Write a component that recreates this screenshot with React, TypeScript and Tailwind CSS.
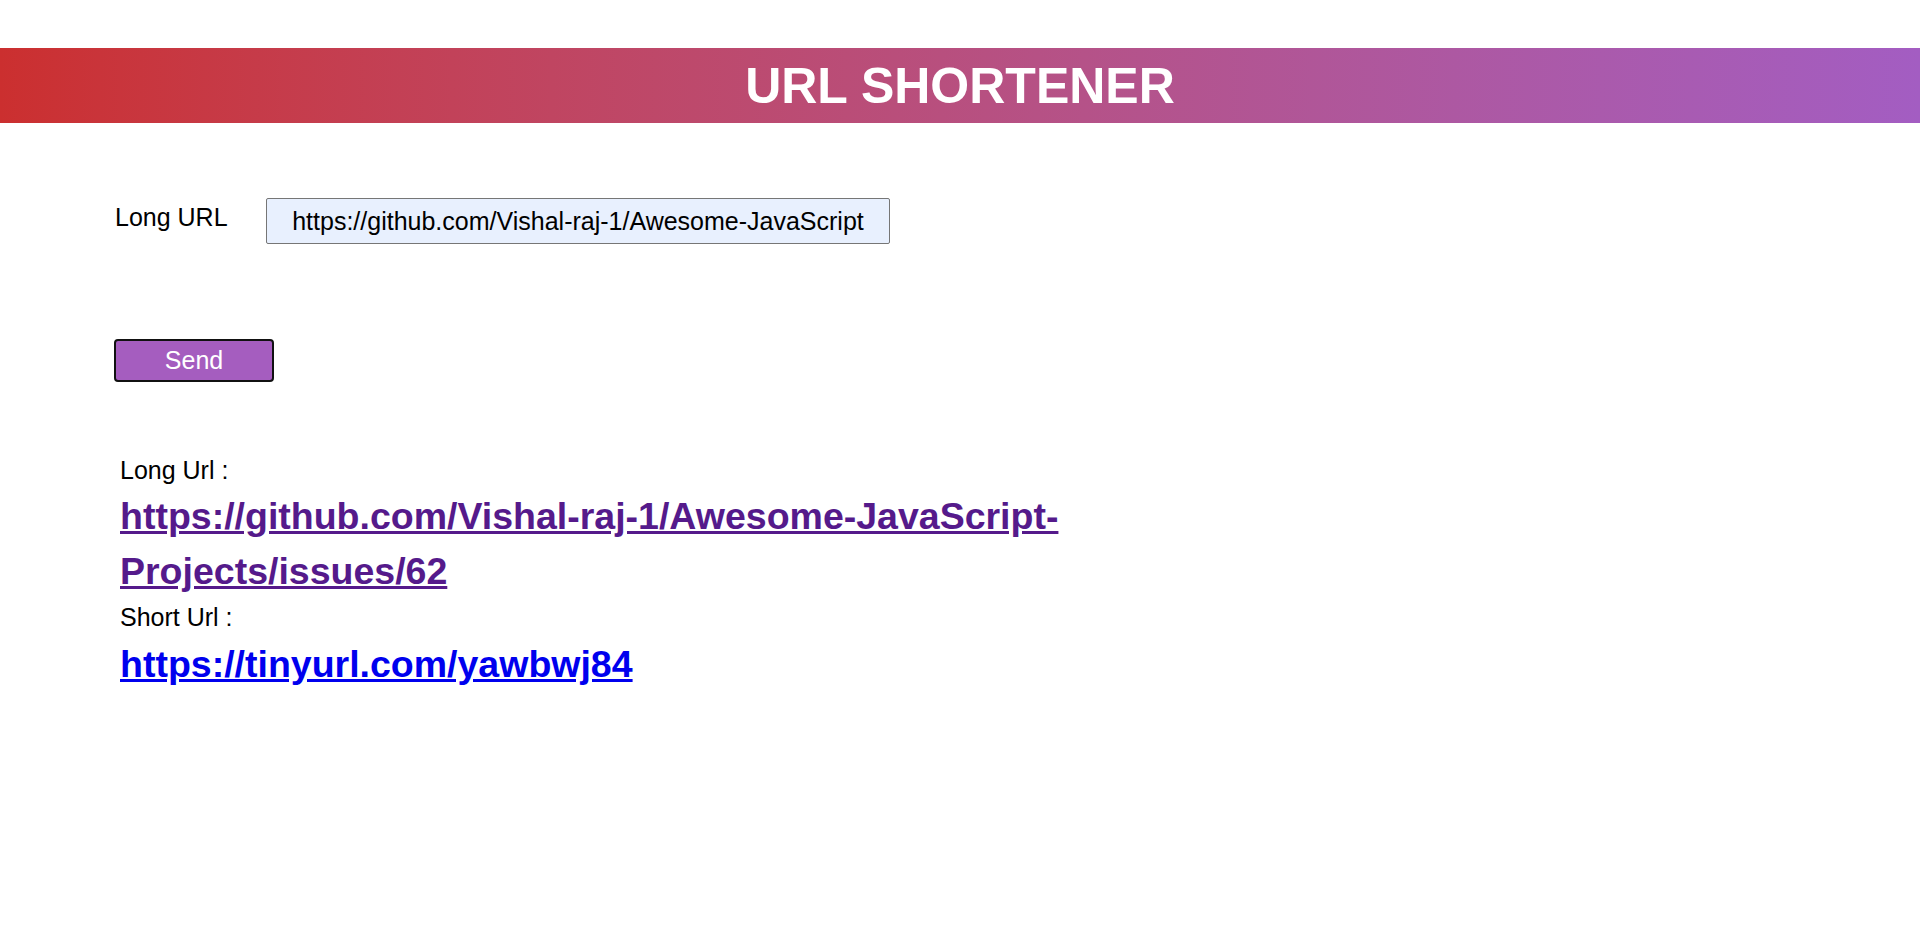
export default function App() {
  return (
    <div className="min-h-screen bg-white pt-[48px] font-['Liberation_Sans',Arial,sans-serif] text-black">
      <header className="flex h-[75px] items-center justify-center bg-gradient-to-r from-[#cb2f2f] to-[#a35dc2]">
        <h1 className="text-[50px] font-bold leading-none text-white">URL SHORTENER</h1>
      </header>

      <main className="pl-[115px]">
        <div className="mt-[75px] flex items-start">
          <label className="w-[151px] pt-[5px] text-[25px] leading-[29px]">Long URL</label>
          <input
            type="text"
            readOnly
            value="https://github.com/Vishal-raj-1/Awesome-JavaScript"
            className="h-[46px] w-[624px] rounded-[2px] border border-[#767676] bg-[#e8f0fe] text-center text-[25px] text-black outline-none"
          />
        </div>

        <button className="ml-[-1px] mt-[95px] h-[43px] w-[160px] rounded-[4px] border-2 border-[#111] bg-[#a55dbf] text-[25px] leading-none text-white">
          Send
        </button>

        <div className="mt-[74px] w-[960px] pl-[5px]">
          <p className="text-[25px] leading-[29px]">Long Url :</p>
          <a
            href="#"
            className="mt-[4px] block break-words text-[37.5px] font-bold leading-[55px] text-[#551a8b] underline"
          >
            https://github.com/Vishal-raj-1/Awesome-JavaScript-Projects/issues/62
          </a>
          <p className="mt-[4px] text-[25px] leading-[29px]">Short Url :</p>
          <a
            href="#"
            className="mt-[5px] block text-[37.5px] font-bold leading-[55px] text-[#0000ee] underline"
          >
            https://tinyurl.com/yawbwj84
          </a>
        </div>
      </main>
    </div>
  );
}
